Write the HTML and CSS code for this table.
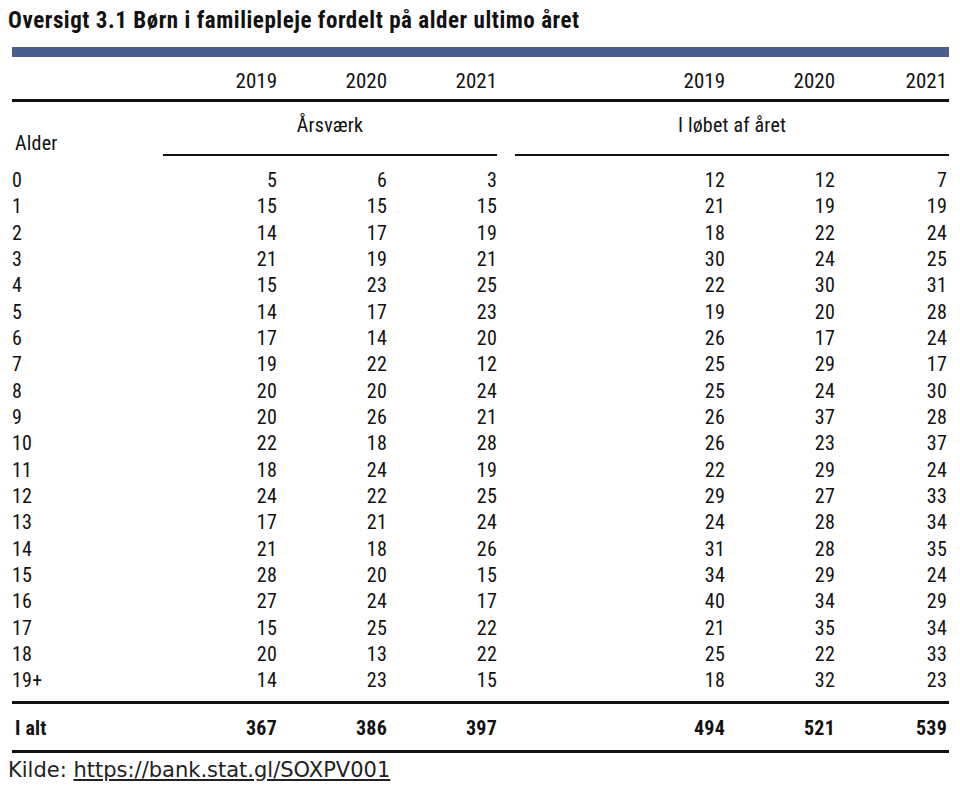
FILE: index.html
```html
<!DOCTYPE html>
<html lang="da">
<head>
<meta charset="utf-8">
<title>Oversigt 3.1</title>
<link rel="stylesheet" href="styles.css">
</head>
<body>
<h1 class="title">Oversigt 3.1 Børn i familiepleje fordelt på alder ultimo året</h1>
<div class="bar"></div>
<table class="tbl">
  <colgroup>
    <col class="c-label"><col class="c-n1"><col class="c-n"><col class="c-n"><col class="c-gap"><col class="c-n4"><col class="c-n"><col class="c-n6">
  </colgroup>
  <thead>
    <tr class="years">
      <th></th><th class="num">2019</th><th class="num">2020</th><th class="num">2021</th><th></th><th class="num">2019</th><th class="num">2020</th><th class="num last">2021</th>
    </tr>
    <tr class="groups">
      <th class="alder">Alder</th><th colspan="3" class="grp">Årsværk</th><th></th><th colspan="3" class="grp">I løbet af året</th>
    </tr>
  </thead>
  <tbody>
    <tr class="first"><td class="lbl">0</td><td class="num">5</td><td class="num">6</td><td class="num">3</td><td></td><td class="num">12</td><td class="num">12</td><td class="num last">7</td></tr>
    <tr><td class="lbl">1</td><td class="num">15</td><td class="num">15</td><td class="num">15</td><td></td><td class="num">21</td><td class="num">19</td><td class="num last">19</td></tr>
    <tr><td class="lbl">2</td><td class="num">14</td><td class="num">17</td><td class="num">19</td><td></td><td class="num">18</td><td class="num">22</td><td class="num last">24</td></tr>
    <tr><td class="lbl">3</td><td class="num">21</td><td class="num">19</td><td class="num">21</td><td></td><td class="num">30</td><td class="num">24</td><td class="num last">25</td></tr>
    <tr><td class="lbl">4</td><td class="num">15</td><td class="num">23</td><td class="num">25</td><td></td><td class="num">22</td><td class="num">30</td><td class="num last">31</td></tr>
    <tr><td class="lbl">5</td><td class="num">14</td><td class="num">17</td><td class="num">23</td><td></td><td class="num">19</td><td class="num">20</td><td class="num last">28</td></tr>
    <tr><td class="lbl">6</td><td class="num">17</td><td class="num">14</td><td class="num">20</td><td></td><td class="num">26</td><td class="num">17</td><td class="num last">24</td></tr>
    <tr><td class="lbl">7</td><td class="num">19</td><td class="num">22</td><td class="num">12</td><td></td><td class="num">25</td><td class="num">29</td><td class="num last">17</td></tr>
    <tr><td class="lbl">8</td><td class="num">20</td><td class="num">20</td><td class="num">24</td><td></td><td class="num">25</td><td class="num">24</td><td class="num last">30</td></tr>
    <tr><td class="lbl">9</td><td class="num">20</td><td class="num">26</td><td class="num">21</td><td></td><td class="num">26</td><td class="num">37</td><td class="num last">28</td></tr>
    <tr><td class="lbl">10</td><td class="num">22</td><td class="num">18</td><td class="num">28</td><td></td><td class="num">26</td><td class="num">23</td><td class="num last">37</td></tr>
    <tr><td class="lbl">11</td><td class="num">18</td><td class="num">24</td><td class="num">19</td><td></td><td class="num">22</td><td class="num">29</td><td class="num last">24</td></tr>
    <tr><td class="lbl">12</td><td class="num">24</td><td class="num">22</td><td class="num">25</td><td></td><td class="num">29</td><td class="num">27</td><td class="num last">33</td></tr>
    <tr><td class="lbl">13</td><td class="num">17</td><td class="num">21</td><td class="num">24</td><td></td><td class="num">24</td><td class="num">28</td><td class="num last">34</td></tr>
    <tr><td class="lbl">14</td><td class="num">21</td><td class="num">18</td><td class="num">26</td><td></td><td class="num">31</td><td class="num">28</td><td class="num last">35</td></tr>
    <tr><td class="lbl">15</td><td class="num">28</td><td class="num">20</td><td class="num">15</td><td></td><td class="num">34</td><td class="num">29</td><td class="num last">24</td></tr>
    <tr><td class="lbl">16</td><td class="num">27</td><td class="num">24</td><td class="num">17</td><td></td><td class="num">40</td><td class="num">34</td><td class="num last">29</td></tr>
    <tr><td class="lbl">17</td><td class="num">15</td><td class="num">25</td><td class="num">22</td><td></td><td class="num">21</td><td class="num">35</td><td class="num last">34</td></tr>
    <tr><td class="lbl">18</td><td class="num">20</td><td class="num">13</td><td class="num">22</td><td></td><td class="num">25</td><td class="num">22</td><td class="num last">33</td></tr>
    <tr class="final"><td class="lbl">19+</td><td class="num">14</td><td class="num">23</td><td class="num">15</td><td></td><td class="num">18</td><td class="num">32</td><td class="num last">23</td></tr>
  </tbody>
  <tfoot>
    <tr class="total"><td class="lbl">I alt</td><td class="num">367</td><td class="num">386</td><td class="num">397</td><td></td><td class="num">494</td><td class="num">521</td><td class="num last">539</td></tr>
  </tfoot>
</table>
<p class="source">Kilde: <a class="source-link" href="https://bank.stat.gl/SOXPV001">https://bank.stat.gl/SOXPV001</a></p>
</body>
</html>
```

FILE: styles.css
```css
html, body {
  margin: 0;
  padding: 0;
  background: #ffffff;
}

body {
  font-family: "Roboto Condensed", Roboto, "Liberation Sans", sans-serif;
  font-stretch: condensed;
  color: #111111;
}

.title {
  margin: 0;
  padding: 8px 0 0 8px;
  font-size: 23px;
  letter-spacing: 0.55px;
  line-height: 26px;
  font-weight: bold;
  color: #111111;
}

.bar {
  margin: 13px 0 0 12px;
  width: 937px;
  height: 10px;
  background: #4b5d8d;
}

.tbl {
  margin-left: 12px;
  width: 937px;
  table-layout: fixed;
  border-collapse: separate;
  border-spacing: 0;
  font-size: 20px;
  letter-spacing: 0.2px;
}

.c-label { width: 151px; }
.c-n1 { width: 114px; }
.c-n { width: 110px; }
.c-gap { width: 18px; }
.c-n4 { width: 210px; }
.c-n6 { width: 114px; }

.tbl th,
.tbl td {
  padding: 0;
  font-weight: normal;
  white-space: nowrap;
}

.num { text-align: right; }
.num.last { padding-right: 2px; }
.lbl { text-align: left; padding-left: 3px; }

.years th {
  padding-top: 12px;
  padding-bottom: 6px;
  line-height: 24px;
  font-size: 21px;
  letter-spacing: 0;
  border-bottom: 3px solid #111111;
}
.years th.num.last { padding-right: 2px; }

.groups th {
  line-height: 24px;
  vertical-align: top;
}
.groups .alder {
  text-align: left;
  padding: 29px 0 1px 3px;
}
.groups .grp {
  text-align: center;
  padding: 11px 0 17px 0;
  border-bottom: 2px solid #111111;
}

tbody td {
  line-height: 26.33px;
}
tbody .first td { padding-top: 11px; }
tbody .first td.num.last { padding-right: 2px; }
tbody .final td { padding-bottom: 7px; }

.total td {
  font-weight: bold;
  line-height: 24px;
  padding-top: 12px;
  padding-bottom: 10px;
  border-top: 3px solid #111111;
  border-bottom: 3px solid #111111;
}
.total td.lbl { padding-left: 3px; }

.source {
  margin: 5px 0 0 0;
  padding-left: 8px;
  font-family: "DejaVu Sans", Verdana, sans-serif;
  font-stretch: normal;
  font-size: 21px;
  letter-spacing: 0;
  line-height: 24px;
  color: #222222;
}

.source-link {
  color: #222222;
  text-decoration: underline;
}
```
